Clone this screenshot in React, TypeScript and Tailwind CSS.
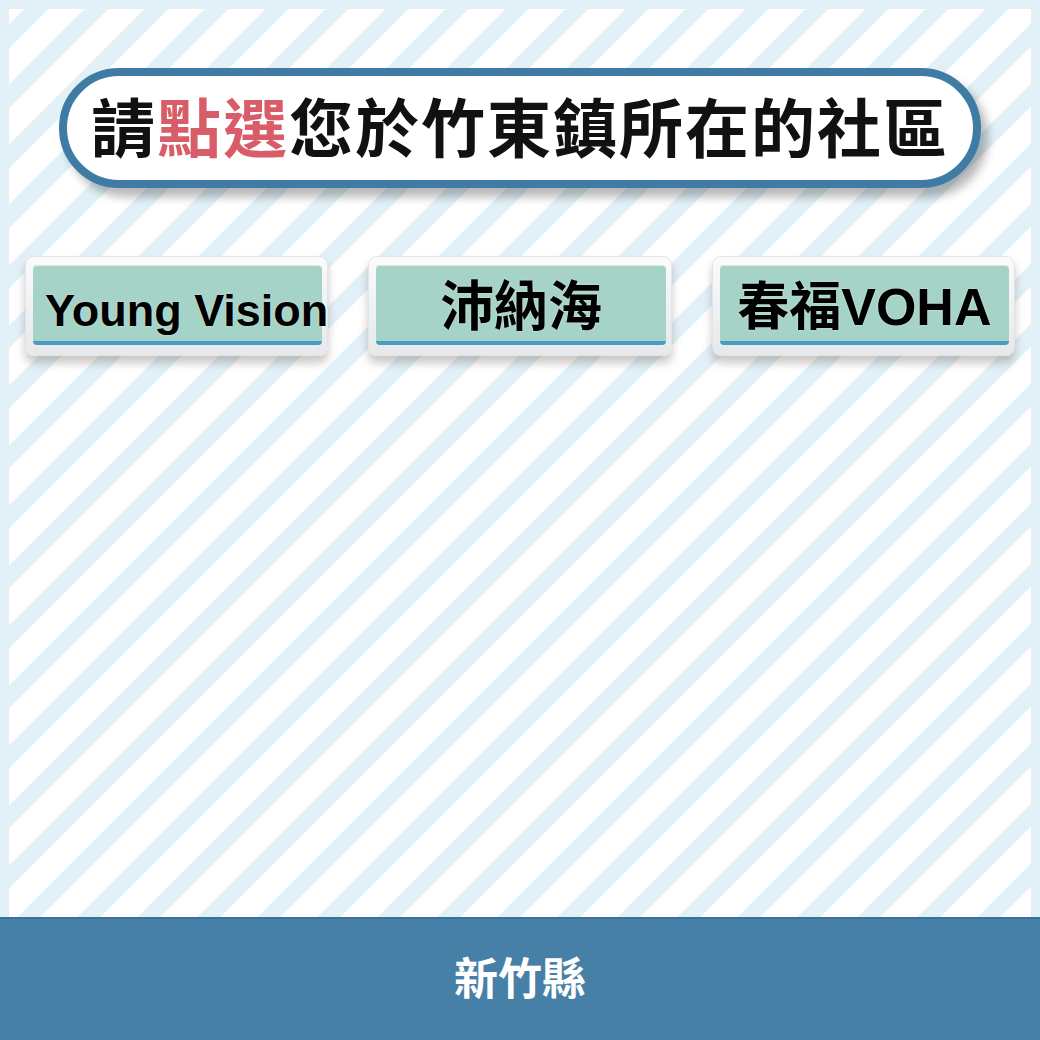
const cjk = { fontFamily: '"Liberation Sans", "Noto Sans CJK TC", sans-serif' };

const communities = [
  { name: 'Young Vision', cls: 'justify-start pl-[12px] text-[45px] pt-[14px]' },
  { name: '沛納海', cls: 'justify-center text-[54px] pt-[8px]' },
  { name: '春福VOHA', cls: 'justify-center text-[52px] pt-[8px]' },
];

function CommunityButton({ name, cls }: { name: string; cls: string }) {
  return (
    <button className="h-[100px] rounded-[9px] border border-[#e2e4e6] bg-gradient-to-b from-[#fbfbfc] to-[#e6e8ea] pt-[8px] pb-[10px] pl-[7px] pr-[5px] shadow-[0_7px_8px_rgba(110,95,85,0.35)]">
      <div
        className={`flex h-full items-center overflow-visible whitespace-nowrap rounded-[4px] border-b-[4px] border-[#4a9cc1] bg-[#a6d3c7] font-bold leading-none text-black shadow-[inset_0_1px_0_rgba(255,255,255,0.6)] ${cls}`}
        style={cjk}
      >
        <span className="[text-shadow:0_0_2px_rgba(255,255,255,0.6)]">{name}</span>
      </div>
    </button>
  );
}

export default function App() {
  return (
    <div className="flex h-[1040px] w-[1040px] flex-col" style={cjk}>
      <div className="h-[917px] bg-[#e2f0f7] px-[9px] pt-[9px]">
        <div className="h-full bg-[repeating-linear-gradient(135deg,#ffffff_0px,#ffffff_11.3px,#e2f0f7_11.3px,#e2f0f7_27.6px,#ffffff_27.6px,#ffffff_42.43px)] pt-[59px]">
          <div className="mx-auto flex h-[120px] w-[922px] items-center justify-center rounded-full border-[8px] border-[#3f7ba2] bg-white pt-[4px] shadow-[7px_9px_10px_rgba(0,0,0,0.28)]">
            <h1 className="text-[64px] font-bold leading-none tracking-[2px] text-[#111]">
              請<span className="text-[#d95d68]">點選</span>您於竹東鎮所在的社區
            </h1>
          </div>

          <div className="mt-[68px] grid grid-cols-3 gap-[40px] px-[16px]">
            {communities.map((c) => (
              <CommunityButton key={c.name} {...c} />
            ))}
          </div>
        </div>
      </div>

      <div className="flex flex-1 items-center justify-center border-t-[2px] border-[#3a719a] bg-[#4680a6]">
        <span className="text-[44px] font-bold leading-none text-white">新竹縣</span>
      </div>
    </div>
  );
}
